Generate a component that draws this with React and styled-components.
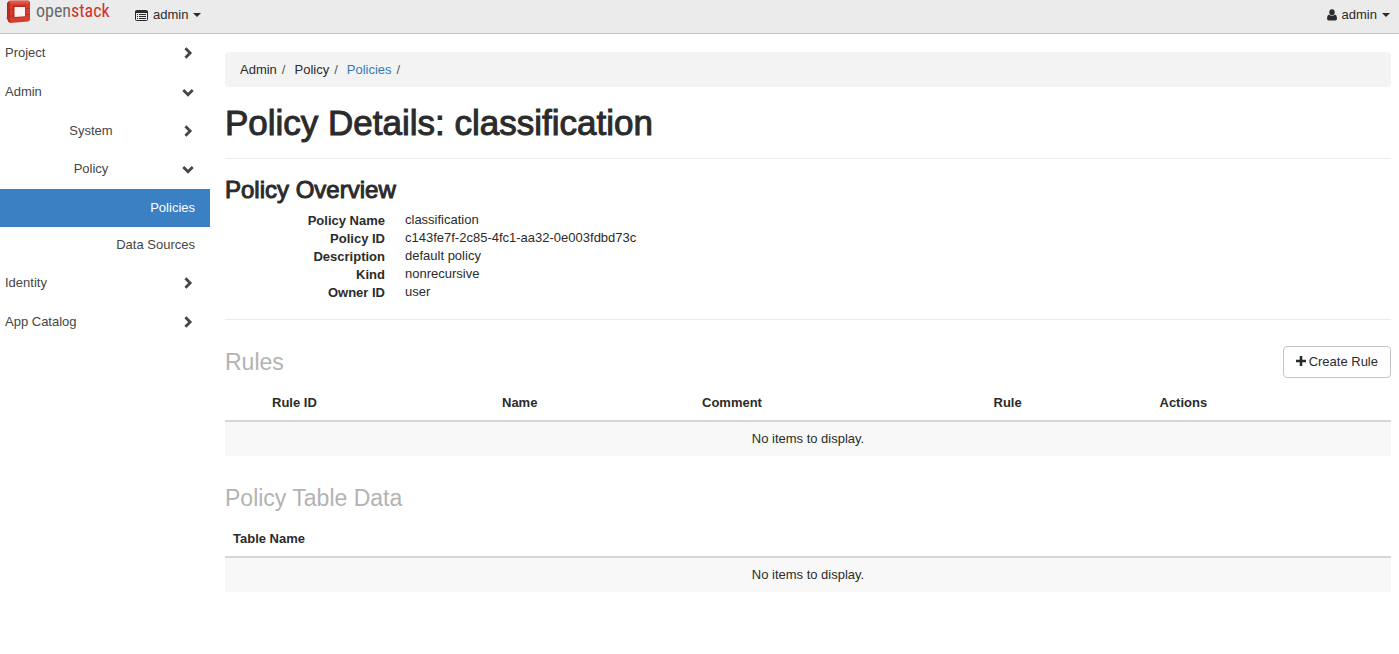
import React from "react";
import styled, { createGlobalStyle, css } from "styled-components";

const GlobalStyle = createGlobalStyle`
  *, *::before, *::after { box-sizing: border-box; }
  body {
    margin: 0;
    background: #fff;
    color: #2b2b2b;
    font: 13px/18px "Liberation Sans", Arial, Helvetica, sans-serif;
  }
  a { color: inherit; text-decoration: none; }
`;

const TopBar = styled.header`
  display: flex;
  align-items: flex-start;
  justify-content: space-between;
  height: 34px;
  padding: 0 9px 0 5px;
  background: #ebebeb;
  border-bottom: 1px solid #c3c3c3;
`;

const TopBarGroup = styled.div`
  display: flex;
  align-items: flex-start;
`;

const Brand = styled.a`
  display: flex;
  align-items: flex-start;
  gap: 6px;
  width: 130px;
  height: 24px;
`;

const BrandName = styled.span`
  font: 18px/22px "Roboto Condensed", "Open Sans Condensed", "Liberation Sans Narrow", "Arial Narrow", "Noto Sans Condensed", "Lato", sans-serif;
  color: #6a6a6a;

  strong {
    font-weight: 400;
    color: #d4302c;
  }
`;

const MenuButton = styled.button`
  display: flex;
  align-items: center;
  gap: 5px;
  height: 30px;
  padding: 0;
  border: 0;
  background: none;
  color: #2b2b2b;
  font: inherit;
`;

const Caret = styled.span`
  border: 4px solid transparent;
  border-top-color: currentColor;
  border-bottom: 0;
`;

const Layout = styled.div`
  display: flex;
  align-items: flex-start;
`;

const Sidebar = styled.nav`
  flex: 0 0 210px;
`;

const NavList = styled.ul`
  margin: 0;
  padding: 0;
  list-style: none;
`;

const Leaves = styled(NavList)`
  padding-top: 1px;
`;

const NavToggle = styled.button`
  display: flex;
  align-items: center;
  justify-content: space-between;
  width: 100%;
  height: ${(p) => (p.$nested ? 38 : 39)}px;
  padding: 0 16px 2px 5px;
  border: 0;
  background: none;
  color: #454545;
  font: inherit;
  text-align: left;

  ${(p) =>
    p.$nested &&
    css`
      padding-left: 0;
      padding-bottom: 1px;

      span {
        flex: 1;
        text-align: center;
      }
    `}
`;

const NavLink = styled.a`
  display: block;
  padding: 9px 15px 10px;
  text-align: right;
  color: #454545;

  &[aria-current] {
    padding: 10px 15px;
    background: #3b80c3;
    color: #fff;
  }
`;

const Main = styled.main`
  flex: 1;
  min-width: 0;
  padding: 18px 8px 18px 15px;
`;

const Breadcrumb = styled.ol`
  display: flex;
  margin: 0;
  padding: 9px 15px 8px;
  border-radius: 4px;
  background: #f3f3f3;
  list-style: none;
`;

const Crumb = styled.li`
  padding-right: 9px;

  &::after {
    content: "/";
    padding-left: 5px;
    color: #555;
  }

  a { color: #337ab7; }
`;

const PageTitle = styled.h1`
  margin: 0;
  padding: 17px 0;
  border-bottom: 1px solid #ebebeb;
  font-size: 35px;
  line-height: 37px;
  font-weight: 400;
  -webkit-text-stroke: 1px currentColor;
`;

const Overview = styled.section`
  padding: 18px 0;
  border-bottom: 1px solid #ebebeb;
`;

const OverviewTitle = styled.h2`
  margin: 0 0 8px;
  font-size: 24px;
  line-height: 26px;
  font-weight: 400;
  -webkit-text-stroke: 1px currentColor;
`;

const Details = styled.dl`
  display: grid;
  grid-template-columns: 160px 1fr;
  column-gap: 20px;
  margin: 0;

  dt {
    padding-top: 1px;
    font-weight: 700;
    line-height: 17px;
    text-align: right;
  }

  dd { margin: 0; }
`;

const Panel = styled.section`
  padding-top: 26px;
`;

const PanelHeader = styled.div`
  display: flex;
  align-items: flex-start;
  justify-content: space-between;
  height: 34px;
`;

const PanelTitle = styled.h3`
  margin: 0;
  color: #b3b3b3;
  font-size: 23px;
  line-height: 32px;
  font-weight: 400;
`;

const ActionButton = styled.button`
  display: flex;
  align-items: center;
  gap: 3px;
  height: 32px;
  padding: 0 12px;
  border: 1px solid #c4c4c4;
  border-radius: 4px;
  background: #fff;
  color: #2b2b2b;
  font: inherit;

  svg { margin-bottom: 2px; }
`;

const DataTable = styled.table`
  width: 100%;
  border-collapse: separate;
  border-spacing: 0;
  table-layout: fixed;

  th {
    height: 42px;
    padding: 14px 8px 8px;
    border-bottom: 2px solid #d6d6d6;
    text-align: left;
    vertical-align: bottom;
  }

  td {
    height: 34px;
    padding: 8px;
    background: #f8f8f8;
    text-align: center;
  }
`;

const Col = styled.col`
  width: ${(p) => p.$width};
`;

const OpenStackLogo = () => (
  <svg width="25" height="24" viewBox="0 0 25 24" aria-hidden="true">
    <path d="M0 17L4 18L8 22L6 23Z" fill="#cbbcba" />
    <path d="M2 3L4 1V22L2 19Z" fill="#a9271e" />
    <path d="M3 2L5 0.5H23.5L25 2V20L23.5 21.5L5 23L3 21Z" fill="#d63f30" />
    <path d="M3 2L5 3V23L3 21Z" fill="#b92a20" />
    <path d="M5 1H24V3.5H5Z" fill="#e25746" />
    <path d="M8 5.5H20.5V17L8 18Z" fill="#b92a20" />
    <path d="M9.5 7H20V16.2L9.5 17Z" fill="#fbf4f2" />
    <path d="M3 9.5H8M21 8.5H25M3 16H8M21 14.5H25" stroke="#b92a20" strokeWidth="0.8" fill="none" />
  </svg>
);

const ListIcon = () => (
  <svg width="13" height="11" viewBox="0 0 13 11" aria-hidden="true">
    <rect x="0.5" y="0.5" width="12" height="10" rx="1" fill="none" stroke="currentColor" />
    <path d="M0 1h13v2H0z" fill="currentColor" />
    <path d="M2 4.5h1M4 4.5h7M2 6.5h1M4 6.5h7M2 8.5h1M4 8.5h7" stroke="currentColor" />
  </svg>
);

const UserIcon = () => (
  <svg width="10" height="12" viewBox="0 0 10 12" aria-hidden="true">
    <ellipse cx="5" cy="3.2" rx="2.7" ry="3" fill="currentColor" />
    <path d="M2 5.6Q5 8 8 5.6Q10 6.2 10 9.2Q10 11.4 8.4 11.4H1.6Q0 11.4 0 9.2Q0 6.2 2 5.6Z" fill="currentColor" />
  </svg>
);

const PlusIcon = () => (
  <svg width="10" height="10" viewBox="0 0 10 10" aria-hidden="true">
    <path d="M5 0v10M0 5h10" stroke="currentColor" strokeWidth="2.6" />
  </svg>
);

const Chevron = ({ open }) => (
  <svg width="12" height="12" viewBox="0 0 12 12" aria-hidden="true">
    <path
      d={open ? "M1.3 4L6 8.7L10.7 4" : "M3.4 1.3L8.1 6L3.4 10.7"}
      fill="none"
      stroke="currentColor"
      strokeWidth="2.8"
    />
  </svg>
);

const NavGroup = ({ label, open = false, nested = false, children }) => (
  <li>
    <NavToggle type="button" $nested={nested} aria-expanded={open}>
      <span>{label}</span>
      <Chevron open={open} />
    </NavToggle>
    {children}
  </li>
);

const details = [
  ["Policy Name", "classification"],
  ["Policy ID", "c143fe7f-2c85-4fc1-aa32-0e003fdbd73c"],
  ["Description", "default policy"],
  ["Kind", "nonrecursive"],
  ["Owner ID", "user"],
];

const ruleColumns = [
  ["Rule ID", "230px"],
  ["Name", "200px"],
  ["Comment", "25%"],
  ["Rule", "166px"],
  ["Actions", "auto"],
];

export default function App() {
  return (
    <>
      <GlobalStyle />
      <TopBar>
        <TopBarGroup>
          <Brand href="#">
            <OpenStackLogo />
            <BrandName>
              open<strong>stack</strong>
            </BrandName>
          </Brand>
          <MenuButton type="button">
            <ListIcon />
            admin
            <Caret />
          </MenuButton>
        </TopBarGroup>
        <MenuButton type="button">
          <UserIcon />
          admin
          <Caret />
        </MenuButton>
      </TopBar>

      <Layout>
        <Sidebar aria-label="Dashboards">
          <NavList>
            <NavGroup label="Project" />
            <NavGroup label="Admin" open>
              <NavList>
                <NavGroup label="System" nested />
                <NavGroup label="Policy" nested open>
                  <Leaves>
                    <li>
                      <NavLink href="#" aria-current="page">Policies</NavLink>
                    </li>
                    <li>
                      <NavLink href="#">Data Sources</NavLink>
                    </li>
                  </Leaves>
                </NavGroup>
              </NavList>
            </NavGroup>
            <NavGroup label="Identity" />
            <NavGroup label="App Catalog" />
          </NavList>
        </Sidebar>

        <Main>
          <Breadcrumb>
            <Crumb>Admin</Crumb>
            <Crumb>Policy</Crumb>
            <Crumb>
              <a href="#">Policies</a>
            </Crumb>
          </Breadcrumb>
          <PageTitle>Policy Details: classification</PageTitle>

          <Overview>
            <OverviewTitle>Policy Overview</OverviewTitle>
            <Details>
              {details.map(([term, value]) => (
                <React.Fragment key={term}>
                  <dt>{term}</dt>
                  <dd>{value}</dd>
                </React.Fragment>
              ))}
            </Details>
          </Overview>

          <Panel>
            <PanelHeader>
              <PanelTitle>Rules</PanelTitle>
              <ActionButton type="button">
                <PlusIcon />
                Create Rule
              </ActionButton>
            </PanelHeader>
            <DataTable>
              <colgroup>
                <Col $width="39px" />
                {ruleColumns.map(([name, width]) => (
                  <Col key={name} $width={width} />
                ))}
              </colgroup>
              <thead>
                <tr>
                  <th />
                  {ruleColumns.map(([name]) => (
                    <th key={name} scope="col">{name}</th>
                  ))}
                </tr>
              </thead>
              <tbody>
                <tr>
                  <td colSpan={6}>No items to display.</td>
                </tr>
              </tbody>
            </DataTable>
          </Panel>

          <Panel>
            <PanelHeader>
              <PanelTitle>Policy Table Data</PanelTitle>
            </PanelHeader>
            <DataTable>
              <thead>
                <tr>
                  <th scope="col">Table Name</th>
                </tr>
              </thead>
              <tbody>
                <tr>
                  <td>No items to display.</td>
                </tr>
              </tbody>
            </DataTable>
          </Panel>
        </Main>
      </Layout>
    </>
  );
}
